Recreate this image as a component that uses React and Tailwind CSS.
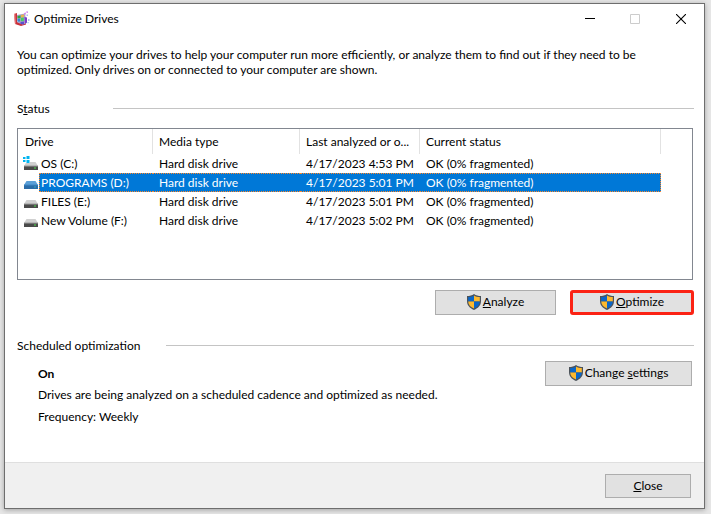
import React from 'react';

const drives = [
  { name: 'OS (C:)', type: 'Hard disk drive', analyzed: '4/17/2023 4:53 PM', status: 'OK (0% fragmented)', system: true },
  { name: 'PROGRAMS (D:)', type: 'Hard disk drive', analyzed: '4/17/2023 5:01 PM', status: 'OK (0% fragmented)', selected: true },
  { name: 'FILES (E:)', type: 'Hard disk drive', analyzed: '4/17/2023 5:01 PM', status: 'OK (0% fragmented)' },
  { name: 'New Volume (F:)', type: 'Hard disk drive', analyzed: '4/17/2023 5:02 PM', status: 'OK (0% fragmented)' },
];

const AppIcon = () => (
  <svg width="16" height="16" viewBox="0 0 16 16" aria-hidden="true">
    <path d="M0 3l3-1v9l9 1.500v1l-5 1.500-6-2z" fill="#c9303a" />
    <path d="M0 3l1.200-.4.600 10L1 13z" fill="#ef8f8f" />
    <path d="M3 4L11 2.500l1.500 9.500-4 1.500-5-2z" fill="#a9a3c8" />
    <path d="M3.500 5l3-.5V7l-3 .5z" fill="#2fa640" />
    <path d="M7 4l3-.5V6l-3 .5z" fill="#e8b44c" />
    <path d="M3.500 8l2.500-.5V10.500H3.500z" fill="#2f8ad8" />
    <path d="M6.800 7l3-.5v3.500l-3 .3z" fill="#45cc66" />
    <path d="M10.500 6l2.500.5v5L11 13z" fill="#7a3ec8" />
    <path d="M6.500 11l3.500-.5v3l-3.500-.5z" fill="#5d4fd0" />
    <path d="M10 2l2-.5v2h-2zM12.500 0l1.500.5v1.500h-1.500z" fill="#d68cf0" />
    <path d="M12.500 3.500H14V5h-1.500zM14 8h1.500v2H14z" fill="#b0bdf4" />
    <path d="M13.500 11h1.200v1.200h-1.200z" fill="#8fd3ea" />
  </svg>
);

const DriveIcon = ({ system, selected }) => (
  <svg width="16" height="16" viewBox="0 0 16 16" aria-hidden="true">
    <path d="M3.500 6h9L15 10H1z" fill={selected ? '#5a9fd8' : '#d0d0d0'} />
    <path d="M1 10h14v4H1z" fill={selected ? '#2b6ca8' : '#4a4a4a'} />
    <path d="M1 9.500h14v1H1z" fill={selected ? '#3f86c4' : '#9c9c9c'} />
    <path d="M11 11.500h2v1h-2z" fill={selected ? '#38a8b8' : '#4be04b'} />
    {system && (
      <>
        <path d="M0 0h7v7H0z" fill="#fff" />
        <path d="M0 1h2.500v2H0zM3.500 0h3v3h-3zM0 4h2.500v2H0zM3.500 4h3v3h-3z" fill="#00b4f0" />
      </>
    )}
  </svg>
);

const ShieldIcon = () => (
  <svg width="14" height="16" viewBox="0 0 14 16" className="shrink-0" aria-hidden="true">
    <path d="M7 0c2 1.400 4.400 2 7 2v5c0 4.200-2.600 7-7 9-4.400-2-7-4.800-7-9V2c2.600 0 5-.6 7-2z" fill="#4b5259" />
    <path d="M7 1.400V7.500H1.200V3.100C3.400 3 5.400 2.400 7 1.400z" fill="#0a66c8" />
    <path d="M7 1.400V7.500h5.800V3.100C10.600 3 8.600 2.400 7 1.400z" fill="#fdb92e" />
    <path d="M7 14.600V7.500H1.200c.1 3.400 2.200 5.500 5.800 7.100z" fill="#fdb92e" />
    <path d="M7 14.600V7.500h5.800c-.1 3.400-2.200 5.500-5.800 7.100z" fill="#0a66c8" />
  </svg>
);

const buttonBase = 'flex items-center justify-center gap-0.5 bg-[#e1e1e1] hover:bg-[#e5f1fb]';

const App = () => {
  return (
    <div className="flex min-h-screen flex-col bg-[#e6e6e6] pt-[3px] pr-[6px] pb-[5px] pl-1 font-['Lato',sans-serif] text-[12px] leading-[15px] text-black">
      <main className="flex flex-1 flex-col border border-[#6e6e6e] bg-white shadow-[0_1px_5px_rgba(0,0,0,0.3)]">
        {/* Title bar */}
        <header className="flex h-[29px] items-center pl-[9px]">
          <AppIcon />
          <h1 className="ml-1 flex-1">Optimize Drives</h1>
          <button aria-label="Minimize" className="flex h-full w-[45px] items-center justify-center">
            <svg width="10" height="10" viewBox="0 0 10 10"><path d="M0 4.500h10" stroke="#000" /></svg>
          </button>
          <button aria-label="Maximize" disabled className="flex h-full w-[45px] items-center justify-center">
            <svg width="10" height="10" viewBox="0 0 10 10"><path d="M.5.5h9v9h-9z" stroke="#ccc" fill="none" /></svg>
          </button>
          <button aria-label="Close window" className="flex h-full w-[47px] items-center justify-center">
            <svg width="10" height="10" viewBox="0 0 10 10"><path d="M0 0l10 10M10 0L0 10" stroke="#000" strokeWidth="1.100" /></svg>
          </button>
        </header>

        <div className="flex flex-1 flex-col pt-3.5 pr-2.5 pb-9 pl-3">
          <p className="max-w-[640px]">
            You can optimize your drives to help your computer run more efficiently, or analyze them to find out if they need to be optimized. Only drives on or connected to your computer are shown.
          </p>

          {/* Status */}
          <div className="mt-6 flex items-center">
            <h2 className="w-24">S<u>t</u>atus</h2>
            <div className="h-px flex-1 bg-[#c4c4c4]" />
          </div>
          <div className="mt-3 mr-px min-h-[152px] border border-[#828790] pr-[31px]">
            <table className="w-full table-fixed border-separate border-spacing-0 text-left whitespace-nowrap">
              <thead>
                <tr className="h-[25px]">
                  <th className="w-[135px] border-r border-[#e2e2e2] pl-[7px] font-normal">Drive</th>
                  <th className="w-[147px] border-r border-[#e2e2e2] pl-1.5 font-normal">Media type</th>
                  <th className="w-[120px] border-r border-[#e2e2e2] pl-1.5 font-normal">Last analyzed or o...</th>
                  <th className="border-r border-[#e2e2e2] pl-1.5 font-normal">Current status</th>
                </tr>
              </thead>
              <tbody>
                {drives.map((drive) => {
                  const cell = drive.selected
                    ? 'h-[19px] border-y border-dotted border-[#ff8728] bg-[#0078d7] text-white'
                    : 'h-[19px] border-y border-transparent';
                  return (
                    <tr key={drive.name}>
                      <td className="p-0">
                        <div className="flex items-center">
                          <div className="w-[21px] shrink-0 pl-[5px]">
                            <DriveIcon system={drive.system} selected={drive.selected} />
                          </div>
                          <div className={`${cell} flex-1 border-l pt-px pl-px`}>{drive.name}</div>
                        </div>
                      </td>
                      <td className="p-0"><div className={`${cell} pt-px pl-1.5`}>{drive.type}</div></td>
                      <td className="p-0"><div className={`${cell} pt-px pl-1.5`}>{drive.analyzed}</div></td>
                      <td className="p-0"><div className={`${cell} border-r pt-px pl-1.5`}>{drive.status}</div></td>
                    </tr>
                  );
                })}
              </tbody>
            </table>
          </div>
          <div className="mt-2.5 flex justify-end gap-3.5">
            <button className={`${buttonBase} h-[25px] w-[121px] border border-[#adadad] pb-0.5`}>
              <ShieldIcon />
              <span><u>A</u>nalyze</span>
            </button>
            <button className={`${buttonBase} h-[25px] w-[124px] rounded-[3px] border-3 border-[#fb2314] pb-0.5`}>
              <ShieldIcon />
              <span><u>O</u>ptimize</span>
            </button>
          </div>

          {/* Scheduled optimization */}
          <div className="mt-[23px] flex items-center">
            <h2 className="w-[149px]">Scheduled optimization</h2>
            <div className="h-px flex-1 bg-[#c4c4c4]" />
          </div>
          <div className="mt-2 flex items-start justify-between pr-0.5 pl-[21px]">
            <div className="pt-[5px]">
              <p className="font-bold">On</p>
              <p className="mt-1.5">Drives are being analyzed on a scheduled cadence and optimized as needed.</p>
              <p className="mt-[7px]">Frequency: Weekly</p>
            </div>
            <button className={`${buttonBase} h-[25px] w-[147px] border border-[#adadad] pb-0.5`}>
              <ShieldIcon />
              <span>Change <u>s</u>ettings</span>
            </button>
          </div>
        </div>

        <footer className="flex h-[46px] items-center justify-end border-t border-[#dfdfdf] bg-[#f0f0f0] pr-[13px]">
          <button className={`${buttonBase} h-6 w-[86px] border border-[#adadad]`}>
            <span><u>C</u>lose</span>
          </button>
        </footer>
      </main>
    </div>
  );
};

export default App;
